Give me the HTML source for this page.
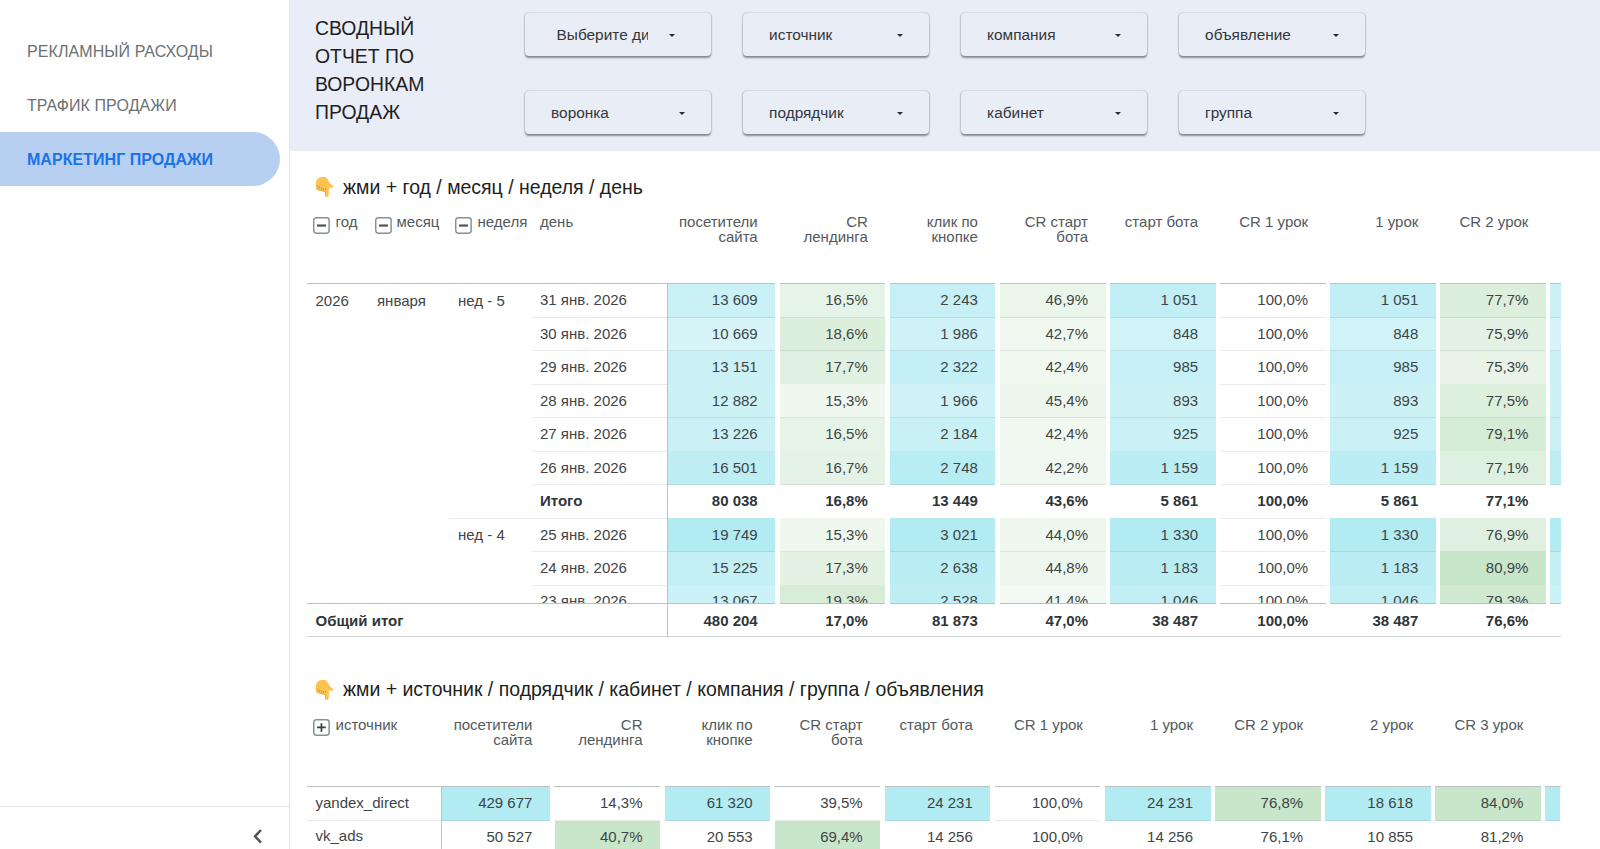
<!DOCTYPE html><html lang="ru"><head><meta charset="utf-8"><title>Сводный отчет по воронкам продаж</title><style>
*{box-sizing:border-box;margin:0;padding:0}
html,body{width:1600px;height:849px;overflow:hidden;background:#fff}
body{font-family:"Liberation Sans",sans-serif;color:#3c4043;position:relative}
.abs{position:absolute}
.t{position:absolute;white-space:nowrap;font-size:15px;line-height:17px;color:#3f4447}
.r{text-align:right}
.b{font-weight:700;color:#30353a}
.h{color:#53595d}
.cell{position:absolute}
.ln{position:absolute;height:1px;background:#dcdfe0}
.dd{position:absolute;width:186px;height:43.2px;border-radius:4px;background:#e9edf6;
    box-shadow:0 1.6px 2px rgba(0,0,0,.40),0 0 1.6px rgba(0,0,0,.28)}
.dd span{position:absolute;top:12.7px;font-size:15.4px;line-height:18px;color:#33373b;white-space:nowrap}
.dd i{position:absolute;top:21.1px;width:0;height:0;border-left:3px solid transparent;border-right:3px solid transparent;border-top:3.2px solid #2a2d30}
.nav{position:absolute;left:27px;font-size:16px;line-height:20px;letter-spacing:.08px;color:#6a7175;white-space:nowrap}
.xb{position:absolute;width:16.5px;height:16.5px;border:1.8px solid #868e91;border-radius:3px;background:#fff}
.xb:before{content:"";position:absolute;left:2.7px;right:2.7px;top:5.3px;height:2.3px;background:#50565a}
.xb.p:before{left:2.6px;right:2.6px;top:5.55px;height:1.8px;background:#3f4447}
.xb.p:after{content:"";position:absolute;top:2.6px;bottom:2.6px;left:5.55px;width:1.8px;background:#3f4447}
.ttl{position:absolute;left:343px;font-size:19.48px;line-height:24px;color:#1d1f21;white-space:nowrap}
</style></head><body>
<div class="abs" style="left:0;top:0;width:289px;height:849px;background:#fff"></div>
<div class="abs" style="left:289px;top:0;width:1px;height:849px;background:#e3e5e8"></div>
<div class="abs" style="left:0;top:132.4px;width:280px;height:54px;background:#b7d0f1;border-radius:0 27px 27px 0"></div>
<div class="nav" style="top:42.3px">РЕКЛАМНЫЙ РАСХОДЫ</div>
<div class="nav" style="top:96.3px">ТРАФИК ПРОДАЖИ</div>
<div class="nav" style="top:150.3px;font-weight:700;color:#1a73e8;letter-spacing:.04px">МАРКЕТИНГ ПРОДАЖИ</div>
<div class="abs" style="left:0;top:806px;width:289px;height:1px;background:#e3e5e8"></div>
<svg class="abs" style="left:250px;top:827.4px" width="16" height="18" viewBox="0 0 16 18"><path d="M11 3 L5 9.3 L11 15.6" fill="none" stroke="#4d5156" stroke-width="2.4"/></svg>
<div class="abs" style="left:290px;top:0;width:1310px;height:151px;background:#e8edf7"></div>
<div class="abs" style="left:315px;top:13.6px;font-size:19.4px;line-height:28px;color:#1f2123">СВОДНЫЙ<br>ОТЧЕТ ПО<br>ВОРОНКАМ<br>ПРОДАЖ</div>
<div class="dd" style="left:524.6px;top:13px"><span style="left:32px"><b style="font-weight:400;display:block;width:91.6px;overflow:hidden">Выберите ди</b></span><i style="left:144.2px"></i></div>
<div class="dd" style="left:742.6px;top:13px"><span style="left:26.5px">источник</span><i style="left:154.6px"></i></div>
<div class="dd" style="left:960.6px;top:13px"><span style="left:26.5px">компания</span><i style="left:154.6px"></i></div>
<div class="dd" style="left:1178.6px;top:13px"><span style="left:26.5px">объявление</span><i style="left:154.6px"></i></div>
<div class="dd" style="left:524.6px;top:91px"><span style="left:26.5px">воронка</span><i style="left:154.6px"></i></div>
<div class="dd" style="left:742.6px;top:91px"><span style="left:26.5px">подрядчик</span><i style="left:154.6px"></i></div>
<div class="dd" style="left:960.6px;top:91px"><span style="left:26.5px">кабинет</span><i style="left:154.6px"></i></div>
<div class="dd" style="left:1178.6px;top:91px"><span style="left:26.5px">группа</span><i style="left:154.6px"></i></div>
<svg class="abs" style="left:306.0px;top:170.0px" width="30" height="34" viewBox="0 0 30 34"><path d="M16.4 6.9 C13.5 6.9 11.7 8.1 11 9.6 C10.3 10.7 10 11.6 10 12.4 L9.8 18 C9.8 18.8 10 19.1 10.5 19.3 L14 20.8 L17.6 21.4 L19 21.6 L19.2 25.6 C19.3 26.6 20 27 20.8 27 C21.8 27 22.5 26.6 22.6 25.9 L23 17.6 L24 17.8 L26.4 17.8 C27.1 17.5 27.3 16.7 27.1 16 C26.9 15.5 26.5 15.2 26 15 L23.6 13.2 C23.2 12 22.8 11.2 22.2 10.4 C21.8 9.5 21.4 8.8 20.8 8.2 C20.2 7.5 19.5 7.1 18.8 7 Z" fill="#fcc350"/><path d="M11.4 15.3 L11.7 16.6 M13.2 16.2 L13.3 18.9 M15.6 17.3 L15.4 19.6 M17.6 18 L17.3 20.4 M19.5 18.3 L19.3 20" stroke="#c58f3c" stroke-width=".8" fill="none"/><path d="M10 18.6 L14 20.5 L19.2 21.5 L19.5 25.6" stroke="#cf9a48" stroke-width=".7" fill="none" opacity=".8"/></svg>
<div class="ttl" style="top:175px">жми + год / месяц / неделя / день</div>
<svg class="abs" style="left:312.8px;top:216.8px" width="18" height="18" viewBox="0 0 18 18"><rect x=".75" y=".75" width="15.4" height="15.4" rx="2.6" fill="#fff" stroke="#868f92" stroke-width="1.45"/><path d="M3.9499999999999993 8.549999999999999 H12.95" stroke="#4d5357" stroke-width="2.2" fill="none"/></svg>
<div class="t h" style="left:335.5px;top:212.9px">год</div>
<svg class="abs" style="left:374.90000000000003px;top:216.8px" width="18" height="18" viewBox="0 0 18 18"><rect x=".75" y=".75" width="15.4" height="15.4" rx="2.6" fill="#fff" stroke="#868f92" stroke-width="1.45"/><path d="M3.9499999999999993 8.549999999999999 H12.95" stroke="#4d5357" stroke-width="2.2" fill="none"/></svg>
<div class="t h" style="left:396.5px;top:212.9px">месяц</div>
<svg class="abs" style="left:455.40000000000003px;top:216.8px" width="18" height="18" viewBox="0 0 18 18"><rect x=".75" y=".75" width="15.4" height="15.4" rx="2.6" fill="#fff" stroke="#868f92" stroke-width="1.45"/><path d="M3.9499999999999993 8.549999999999999 H12.95" stroke="#4d5357" stroke-width="2.2" fill="none"/></svg>
<div class="t h" style="left:477.5px;top:212.9px">неделя</div>
<div class="t h" style="left:540px;top:212.9px">день</div>
<div class="t h r" style="left:617.7px;width:140px;top:214px;line-height:15px">посетители<br>сайта</div>
<div class="t h r" style="left:727.8px;width:140px;top:214px;line-height:15px">CR<br>лендинга</div>
<div class="t h r" style="left:837.9px;width:140px;top:214px;line-height:15px">клик по<br>кнопке</div>
<div class="t h r" style="left:948.0px;width:140px;top:214px;line-height:15px">CR старт<br>бота</div>
<div class="t h r" style="left:1058.1px;width:140px;top:214px;line-height:15px">старт бота</div>
<div class="t h r" style="left:1168.2px;width:140px;top:214px;line-height:15px">CR 1 урок</div>
<div class="t h r" style="left:1278.3px;width:140px;top:214px;line-height:15px">1 урок</div>
<div class="t h r" style="left:1388.4px;width:140px;top:214px;line-height:15px">CR 2 урок</div>
<div class="abs" style="left:300px;top:284.0px;width:1261px;height:319.0px;overflow:hidden">
<div class="cell" style="left:367.4px;top:0.0px;width:107.8px;height:33.8px;background:rgb(201,241,246)"></div>
<div class="t r" style="left:357.7px;width:100px;top:7.3px">13 609</div>
<div class="cell" style="left:479.8px;top:0.0px;width:105.5px;height:33.8px;background:rgb(230,244,231)"></div>
<div class="t r" style="left:467.8px;width:100px;top:7.3px">16,5%</div>
<div class="cell" style="left:589.9px;top:0.0px;width:105.5px;height:33.8px;background:rgb(198,240,245)"></div>
<div class="t r" style="left:577.9px;width:100px;top:7.3px">2 243</div>
<div class="cell" style="left:700.0px;top:0.0px;width:105.5px;height:33.8px;background:rgb(234,246,234)"></div>
<div class="t r" style="left:688.0px;width:100px;top:7.3px">46,9%</div>
<div class="cell" style="left:810.1px;top:0.0px;width:105.5px;height:33.8px;background:rgb(193,239,245)"></div>
<div class="t r" style="left:798.1px;width:100px;top:7.3px">1 051</div>
<div class="t r" style="left:908.2px;width:100px;top:7.3px">100,0%</div>
<div class="cell" style="left:1030.3px;top:0.0px;width:105.5px;height:33.8px;background:rgb(193,239,245)"></div>
<div class="t r" style="left:1018.3px;width:100px;top:7.3px">1 051</div>
<div class="cell" style="left:1140.4px;top:0.0px;width:105.5px;height:33.8px;background:rgb(219,239,220)"></div>
<div class="t r" style="left:1128.4px;width:100px;top:7.3px">77,7%</div>
<div class="cell" style="left:1249.5px;top:0.0px;width:13px;height:33.8px;background:rgb(201,241,246)"></div>
<div class="t" style="left:240px;top:7.3px">31 янв. 2026</div>
<div class="ln" style="left:231.5px;top:33.0px;width:1029.5px;background:rgba(110,125,130,.17)"></div>
<div class="cell" style="left:367.4px;top:33.5px;width:107.8px;height:33.8px;background:rgb(215,245,248)"></div>
<div class="t r" style="left:357.7px;width:100px;top:40.8px">10 669</div>
<div class="cell" style="left:479.8px;top:33.5px;width:105.5px;height:33.8px;background:rgb(220,239,220)"></div>
<div class="t r" style="left:467.8px;width:100px;top:40.8px">18,6%</div>
<div class="cell" style="left:589.9px;top:33.5px;width:105.5px;height:33.8px;background:rgb(206,242,247)"></div>
<div class="t r" style="left:577.9px;width:100px;top:40.8px">1 986</div>
<div class="cell" style="left:700.0px;top:33.5px;width:105.5px;height:33.8px;background:rgb(240,248,240)"></div>
<div class="t r" style="left:688.0px;width:100px;top:40.8px">42,7%</div>
<div class="cell" style="left:810.1px;top:33.5px;width:105.5px;height:33.8px;background:rgb(207,243,247)"></div>
<div class="t r" style="left:798.1px;width:100px;top:40.8px">848</div>
<div class="t r" style="left:908.2px;width:100px;top:40.8px">100,0%</div>
<div class="cell" style="left:1030.3px;top:33.5px;width:105.5px;height:33.8px;background:rgb(207,243,247)"></div>
<div class="t r" style="left:1018.3px;width:100px;top:40.8px">848</div>
<div class="cell" style="left:1140.4px;top:33.5px;width:105.5px;height:33.8px;background:rgb(228,242,228)"></div>
<div class="t r" style="left:1128.4px;width:100px;top:40.8px">75,9%</div>
<div class="cell" style="left:1249.5px;top:33.5px;width:13px;height:33.8px;background:rgb(215,245,248)"></div>
<div class="t" style="left:240px;top:40.8px">30 янв. 2026</div>
<div class="ln" style="left:231.5px;top:66.4px;width:1029.5px;background:rgba(110,125,130,.17)"></div>
<div class="cell" style="left:367.4px;top:66.9px;width:107.8px;height:33.8px;background:rgb(203,241,246)"></div>
<div class="t r" style="left:357.7px;width:100px;top:74.2px">13 151</div>
<div class="cell" style="left:479.8px;top:66.9px;width:105.5px;height:33.8px;background:rgb(224,241,225)"></div>
<div class="t r" style="left:467.8px;width:100px;top:74.2px">17,7%</div>
<div class="cell" style="left:589.9px;top:66.9px;width:105.5px;height:33.8px;background:rgb(195,239,245)"></div>
<div class="t r" style="left:577.9px;width:100px;top:74.2px">2 322</div>
<div class="cell" style="left:700.0px;top:66.9px;width:105.5px;height:33.8px;background:rgb(240,248,240)"></div>
<div class="t r" style="left:688.0px;width:100px;top:74.2px">42,4%</div>
<div class="cell" style="left:810.1px;top:66.9px;width:105.5px;height:33.8px;background:rgb(198,240,245)"></div>
<div class="t r" style="left:798.1px;width:100px;top:74.2px">985</div>
<div class="t r" style="left:908.2px;width:100px;top:74.2px">100,0%</div>
<div class="cell" style="left:1030.3px;top:66.9px;width:105.5px;height:33.8px;background:rgb(198,240,245)"></div>
<div class="t r" style="left:1018.3px;width:100px;top:74.2px">985</div>
<div class="cell" style="left:1140.4px;top:66.9px;width:105.5px;height:33.8px;background:rgb(232,244,232)"></div>
<div class="t r" style="left:1128.4px;width:100px;top:74.2px">75,3%</div>
<div class="cell" style="left:1249.5px;top:66.9px;width:13px;height:33.8px;background:rgb(203,241,246)"></div>
<div class="t" style="left:240px;top:74.2px">29 янв. 2026</div>
<div class="ln" style="left:231.5px;top:99.9px;width:1029.5px;background:rgba(110,125,130,.17)"></div>
<div class="cell" style="left:367.4px;top:100.4px;width:107.8px;height:33.8px;background:rgb(204,242,246)"></div>
<div class="t r" style="left:357.7px;width:100px;top:107.7px">12 882</div>
<div class="cell" style="left:479.8px;top:100.4px;width:105.5px;height:33.8px;background:rgb(238,248,239)"></div>
<div class="t r" style="left:467.8px;width:100px;top:107.7px">15,3%</div>
<div class="cell" style="left:589.9px;top:100.4px;width:105.5px;height:33.8px;background:rgb(206,242,247)"></div>
<div class="t r" style="left:577.9px;width:100px;top:107.7px">1 966</div>
<div class="cell" style="left:700.0px;top:100.4px;width:105.5px;height:33.8px;background:rgb(236,246,237)"></div>
<div class="t r" style="left:688.0px;width:100px;top:107.7px">45,4%</div>
<div class="cell" style="left:810.1px;top:100.4px;width:105.5px;height:33.8px;background:rgb(204,242,246)"></div>
<div class="t r" style="left:798.1px;width:100px;top:107.7px">893</div>
<div class="t r" style="left:908.2px;width:100px;top:107.7px">100,0%</div>
<div class="cell" style="left:1030.3px;top:100.4px;width:105.5px;height:33.8px;background:rgb(204,242,246)"></div>
<div class="t r" style="left:1018.3px;width:100px;top:107.7px">893</div>
<div class="cell" style="left:1140.4px;top:100.4px;width:105.5px;height:33.8px;background:rgb(221,240,222)"></div>
<div class="t r" style="left:1128.4px;width:100px;top:107.7px">77,5%</div>
<div class="cell" style="left:1249.5px;top:100.4px;width:13px;height:33.8px;background:rgb(204,242,246)"></div>
<div class="t" style="left:240px;top:107.7px">28 янв. 2026</div>
<div class="ln" style="left:231.5px;top:133.4px;width:1029.5px;background:rgba(110,125,130,.17)"></div>
<div class="cell" style="left:367.4px;top:133.9px;width:107.8px;height:33.8px;background:rgb(203,241,246)"></div>
<div class="t r" style="left:357.7px;width:100px;top:141.2px">13 226</div>
<div class="cell" style="left:479.8px;top:133.9px;width:105.5px;height:33.8px;background:rgb(230,244,231)"></div>
<div class="t r" style="left:467.8px;width:100px;top:141.2px">16,5%</div>
<div class="cell" style="left:589.9px;top:133.9px;width:105.5px;height:33.8px;background:rgb(200,241,246)"></div>
<div class="t r" style="left:577.9px;width:100px;top:141.2px">2 184</div>
<div class="cell" style="left:700.0px;top:133.9px;width:105.5px;height:33.8px;background:rgb(240,248,240)"></div>
<div class="t r" style="left:688.0px;width:100px;top:141.2px">42,4%</div>
<div class="cell" style="left:810.1px;top:133.9px;width:105.5px;height:33.8px;background:rgb(201,241,246)"></div>
<div class="t r" style="left:798.1px;width:100px;top:141.2px">925</div>
<div class="t r" style="left:908.2px;width:100px;top:141.2px">100,0%</div>
<div class="cell" style="left:1030.3px;top:133.9px;width:105.5px;height:33.8px;background:rgb(201,241,246)"></div>
<div class="t r" style="left:1018.3px;width:100px;top:141.2px">925</div>
<div class="cell" style="left:1140.4px;top:133.9px;width:105.5px;height:33.8px;background:rgb(213,236,214)"></div>
<div class="t r" style="left:1128.4px;width:100px;top:141.2px">79,1%</div>
<div class="cell" style="left:1249.5px;top:133.9px;width:13px;height:33.8px;background:rgb(203,241,246)"></div>
<div class="t" style="left:240px;top:141.2px">27 янв. 2026</div>
<div class="ln" style="left:231.5px;top:166.8px;width:1029.5px;background:rgba(110,125,130,.17)"></div>
<div class="cell" style="left:367.4px;top:167.3px;width:107.8px;height:33.8px;background:rgb(190,238,244)"></div>
<div class="t r" style="left:357.7px;width:100px;top:174.7px">16 501</div>
<div class="cell" style="left:479.8px;top:167.3px;width:105.5px;height:33.8px;background:rgb(229,243,230)"></div>
<div class="t r" style="left:467.8px;width:100px;top:174.7px">16,7%</div>
<div class="cell" style="left:589.9px;top:167.3px;width:105.5px;height:33.8px;background:rgb(184,237,243)"></div>
<div class="t r" style="left:577.9px;width:100px;top:174.7px">2 748</div>
<div class="cell" style="left:700.0px;top:167.3px;width:105.5px;height:33.8px;background:rgb(241,248,241)"></div>
<div class="t r" style="left:688.0px;width:100px;top:174.7px">42,2%</div>
<div class="cell" style="left:810.1px;top:167.3px;width:105.5px;height:33.8px;background:rgb(187,237,244)"></div>
<div class="t r" style="left:798.1px;width:100px;top:174.7px">1 159</div>
<div class="t r" style="left:908.2px;width:100px;top:174.7px">100,0%</div>
<div class="cell" style="left:1030.3px;top:167.3px;width:105.5px;height:33.8px;background:rgb(187,237,244)"></div>
<div class="t r" style="left:1018.3px;width:100px;top:174.7px">1 159</div>
<div class="cell" style="left:1140.4px;top:167.3px;width:105.5px;height:33.8px;background:rgb(222,240,223)"></div>
<div class="t r" style="left:1128.4px;width:100px;top:174.7px">77,1%</div>
<div class="cell" style="left:1249.5px;top:167.3px;width:13px;height:33.8px;background:rgb(190,238,244)"></div>
<div class="t" style="left:240px;top:174.7px">26 янв. 2026</div>
<div class="ln" style="left:231.5px;top:200.3px;width:1029.5px;background:rgba(110,125,130,.17)"></div>
<div class="t r b" style="left:357.7px;width:100px;top:208.1px">80 038</div>
<div class="t r b" style="left:467.8px;width:100px;top:208.1px">16,8%</div>
<div class="t r b" style="left:577.9px;width:100px;top:208.1px">13 449</div>
<div class="t r b" style="left:688.0px;width:100px;top:208.1px">43,6%</div>
<div class="t r b" style="left:798.1px;width:100px;top:208.1px">5 861</div>
<div class="t r b" style="left:908.2px;width:100px;top:208.1px">100,0%</div>
<div class="t r b" style="left:1018.3px;width:100px;top:208.1px">5 861</div>
<div class="t r b" style="left:1128.4px;width:100px;top:208.1px">77,1%</div>
<div class="t b" style="left:240px;top:208.1px">Итого</div>
<div class="ln" style="left:149.0px;top:233.8px;width:1112.0px;background:rgba(110,125,130,.17)"></div>
<div class="cell" style="left:367.4px;top:234.3px;width:107.8px;height:33.8px;background:rgb(178,235,242)"></div>
<div class="t r" style="left:357.7px;width:100px;top:241.6px">19 749</div>
<div class="cell" style="left:479.8px;top:234.3px;width:105.5px;height:33.8px;background:rgb(238,248,239)"></div>
<div class="t r" style="left:467.8px;width:100px;top:241.6px">15,3%</div>
<div class="cell" style="left:589.9px;top:234.3px;width:105.5px;height:33.8px;background:rgb(178,235,242)"></div>
<div class="t r" style="left:577.9px;width:100px;top:241.6px">3 021</div>
<div class="cell" style="left:700.0px;top:234.3px;width:105.5px;height:33.8px;background:rgb(238,247,238)"></div>
<div class="t r" style="left:688.0px;width:100px;top:241.6px">44,0%</div>
<div class="cell" style="left:810.1px;top:234.3px;width:105.5px;height:33.8px;background:rgb(178,235,242)"></div>
<div class="t r" style="left:798.1px;width:100px;top:241.6px">1 330</div>
<div class="t r" style="left:908.2px;width:100px;top:241.6px">100,0%</div>
<div class="cell" style="left:1030.3px;top:234.3px;width:105.5px;height:33.8px;background:rgb(178,235,242)"></div>
<div class="t r" style="left:1018.3px;width:100px;top:241.6px">1 330</div>
<div class="cell" style="left:1140.4px;top:234.3px;width:105.5px;height:33.8px;background:rgb(223,240,224)"></div>
<div class="t r" style="left:1128.4px;width:100px;top:241.6px">76,9%</div>
<div class="cell" style="left:1249.5px;top:234.3px;width:13px;height:33.8px;background:rgb(178,235,242)"></div>
<div class="t" style="left:240px;top:241.6px">25 янв. 2026</div>
<div class="ln" style="left:231.5px;top:267.3px;width:1029.5px;background:rgba(110,125,130,.17)"></div>
<div class="cell" style="left:367.4px;top:267.8px;width:107.8px;height:33.8px;background:rgb(195,239,245)"></div>
<div class="t r" style="left:357.7px;width:100px;top:275.1px">15 225</div>
<div class="cell" style="left:479.8px;top:267.8px;width:105.5px;height:33.8px;background:rgb(227,242,227)"></div>
<div class="t r" style="left:467.8px;width:100px;top:275.1px">17,3%</div>
<div class="cell" style="left:589.9px;top:267.8px;width:105.5px;height:33.8px;background:rgb(187,237,244)"></div>
<div class="t r" style="left:577.9px;width:100px;top:275.1px">2 638</div>
<div class="cell" style="left:700.0px;top:267.8px;width:105.5px;height:33.8px;background:rgb(237,247,237)"></div>
<div class="t r" style="left:688.0px;width:100px;top:275.1px">44,8%</div>
<div class="cell" style="left:810.1px;top:267.8px;width:105.5px;height:33.8px;background:rgb(186,237,243)"></div>
<div class="t r" style="left:798.1px;width:100px;top:275.1px">1 183</div>
<div class="t r" style="left:908.2px;width:100px;top:275.1px">100,0%</div>
<div class="cell" style="left:1030.3px;top:267.8px;width:105.5px;height:33.8px;background:rgb(186,237,243)"></div>
<div class="t r" style="left:1018.3px;width:100px;top:275.1px">1 183</div>
<div class="cell" style="left:1140.4px;top:267.8px;width:105.5px;height:33.8px;background:rgb(200,230,201)"></div>
<div class="t r" style="left:1128.4px;width:100px;top:275.1px">80,9%</div>
<div class="cell" style="left:1249.5px;top:267.8px;width:13px;height:33.8px;background:rgb(195,239,245)"></div>
<div class="t" style="left:240px;top:275.1px">24 янв. 2026</div>
<div class="ln" style="left:231.5px;top:300.7px;width:1029.5px;background:rgba(110,125,130,.17)"></div>
<div class="cell" style="left:367.4px;top:301.2px;width:107.8px;height:33.8px;background:rgb(203,242,246)"></div>
<div class="t r" style="left:357.7px;width:100px;top:307.5px">13 067</div>
<div class="cell" style="left:479.8px;top:301.2px;width:105.5px;height:33.8px;background:rgb(215,237,216)"></div>
<div class="t r" style="left:467.8px;width:100px;top:307.5px">19,3%</div>
<div class="cell" style="left:589.9px;top:301.2px;width:105.5px;height:33.8px;background:rgb(190,238,244)"></div>
<div class="t r" style="left:577.9px;width:100px;top:307.5px">2 528</div>
<div class="cell" style="left:700.0px;top:301.2px;width:105.5px;height:33.8px;background:rgb(242,249,242)"></div>
<div class="t r" style="left:688.0px;width:100px;top:307.5px">41,4%</div>
<div class="cell" style="left:810.1px;top:301.2px;width:105.5px;height:33.8px;background:rgb(193,239,245)"></div>
<div class="t r" style="left:798.1px;width:100px;top:307.5px">1 046</div>
<div class="t r" style="left:908.2px;width:100px;top:307.5px">100,0%</div>
<div class="cell" style="left:1030.3px;top:301.2px;width:105.5px;height:33.8px;background:rgb(193,239,245)"></div>
<div class="t r" style="left:1018.3px;width:100px;top:307.5px">1 046</div>
<div class="cell" style="left:1140.4px;top:301.2px;width:105.5px;height:33.8px;background:rgb(208,234,209)"></div>
<div class="t r" style="left:1128.4px;width:100px;top:307.5px">79,3%</div>
<div class="cell" style="left:1249.5px;top:301.2px;width:13px;height:33.8px;background:rgb(203,242,246)"></div>
<div class="t" style="left:240px;top:307.5px">23 янв. 2026</div>
<div class="ln" style="left:231.5px;top:334.2px;width:1029.5px;background:rgba(110,125,130,.17)"></div>
<div class="t" style="left:15.5px;top:7.6px">2026</div>
<div class="t" style="left:77px;top:7.6px">января</div>
<div class="t" style="left:158px;top:7.6px">нед - 5</div>
<div class="t" style="left:158px;top:241.9px">нед - 4</div>
</div>
<div class="ln" style="left:307px;top:283px;width:1254px;background:#bcc0c2;height:1px"></div>
<div class="ln" style="left:307px;top:603px;width:1254px;background:#bcc0c2;height:1px"></div>
<div class="ln" style="left:307px;top:636px;width:1254px;background:#d3d6d8;height:1.2px"></div>
<div class="abs" style="left:666.5px;top:284px;width:1.2px;height:353px;background:#bcc1c4"></div>
<div class="abs" style="left:775.2px;top:282.5px;width:4.6px;height:322.3px;background:#fff"></div>
<div class="abs" style="left:885.3px;top:282.5px;width:4.6px;height:322.3px;background:#fff"></div>
<div class="abs" style="left:995.4px;top:282.5px;width:4.6px;height:322.3px;background:#fff"></div>
<div class="abs" style="left:1105.5px;top:282.5px;width:4.6px;height:322.3px;background:#fff"></div>
<div class="abs" style="left:1215.6px;top:282.5px;width:4.6px;height:322.3px;background:#fff"></div>
<div class="abs" style="left:1325.7px;top:282.5px;width:4.6px;height:322.3px;background:#fff"></div>
<div class="abs" style="left:1435.8px;top:282.5px;width:4.6px;height:322.3px;background:#fff"></div>
<div class="abs" style="left:1545.9px;top:282.5px;width:4.6px;height:322.3px;background:#fff"></div>
<div class="abs" style="left:1656.0px;top:282.5px;width:4.6px;height:322.3px;background:#fff"></div>
<div class="t b" style="left:315.5px;top:611.5px">Общий итог</div>
<div class="t r b" style="left:657.7px;width:100px;top:611.5px">480 204</div>
<div class="t r b" style="left:767.8px;width:100px;top:611.5px">17,0%</div>
<div class="t r b" style="left:877.9px;width:100px;top:611.5px">81 873</div>
<div class="t r b" style="left:988.0px;width:100px;top:611.5px">47,0%</div>
<div class="t r b" style="left:1098.1px;width:100px;top:611.5px">38 487</div>
<div class="t r b" style="left:1208.2px;width:100px;top:611.5px">100,0%</div>
<div class="t r b" style="left:1318.3px;width:100px;top:611.5px">38 487</div>
<div class="t r b" style="left:1428.4px;width:100px;top:611.5px">76,6%</div>
<svg class="abs" style="left:306.0px;top:673.0px" width="30" height="34" viewBox="0 0 30 34"><path d="M16.4 6.9 C13.5 6.9 11.7 8.1 11 9.6 C10.3 10.7 10 11.6 10 12.4 L9.8 18 C9.8 18.8 10 19.1 10.5 19.3 L14 20.8 L17.6 21.4 L19 21.6 L19.2 25.6 C19.3 26.6 20 27 20.8 27 C21.8 27 22.5 26.6 22.6 25.9 L23 17.6 L24 17.8 L26.4 17.8 C27.1 17.5 27.3 16.7 27.1 16 C26.9 15.5 26.5 15.2 26 15 L23.6 13.2 C23.2 12 22.8 11.2 22.2 10.4 C21.8 9.5 21.4 8.8 20.8 8.2 C20.2 7.5 19.5 7.1 18.8 7 Z" fill="#fcc350"/><path d="M11.4 15.3 L11.7 16.6 M13.2 16.2 L13.3 18.9 M15.6 17.3 L15.4 19.6 M17.6 18 L17.3 20.4 M19.5 18.3 L19.3 20" stroke="#c58f3c" stroke-width=".8" fill="none"/><path d="M10 18.6 L14 20.5 L19.2 21.5 L19.5 25.6" stroke="#cf9a48" stroke-width=".7" fill="none" opacity=".8"/></svg>
<div class="ttl" style="top:677.4px">жми + источник / подрядчик / кабинет / компания / группа / объявления</div>
<svg class="abs" style="left:312.8px;top:719.1px" width="18" height="18" viewBox="0 0 18 18"><rect x=".75" y=".75" width="15.4" height="15.4" rx="2.6" fill="#fff" stroke="#868f92" stroke-width="1.45"/><path d="M4.1499999999999995 8.45 H12.75 M8.45 4.1499999999999995 V12.75" stroke="#363b3f" stroke-width="1.7" fill="none"/></svg>
<div class="t h" style="left:335.5px;top:716.2px">источник</div>
<div class="t h r" style="left:392.4px;width:140px;top:717.2px;line-height:15px">посетители<br>сайта</div>
<div class="t h r" style="left:502.5px;width:140px;top:717.2px;line-height:15px">CR<br>лендинга</div>
<div class="t h r" style="left:612.6px;width:140px;top:717.2px;line-height:15px">клик по<br>кнопке</div>
<div class="t h r" style="left:722.7px;width:140px;top:717.2px;line-height:15px">CR старт<br>бота</div>
<div class="t h r" style="left:832.8px;width:140px;top:717.2px;line-height:15px">старт бота</div>
<div class="t h r" style="left:942.9px;width:140px;top:717.2px;line-height:15px">CR 1 урок</div>
<div class="t h r" style="left:1053.0px;width:140px;top:717.2px;line-height:15px">1 урок</div>
<div class="t h r" style="left:1163.1px;width:140px;top:717.2px;line-height:15px">CR 2 урок</div>
<div class="t h r" style="left:1273.2px;width:140px;top:717.2px;line-height:15px">2 урок</div>
<div class="t h r" style="left:1383.3px;width:140px;top:717.2px;line-height:15px">CR 3 урок</div>
<div class="cell" style="left:442.1px;top:787.0px;width:107.8px;height:33.8px;background:rgb(178,235,242)"></div>
<div class="t r" style="left:432.4px;width:100px;top:794.0px">429 677</div>
<div class="t r" style="left:542.5px;width:100px;top:794.0px">14,3%</div>
<div class="cell" style="left:664.6px;top:787.0px;width:105.5px;height:33.8px;background:rgb(178,235,242)"></div>
<div class="t r" style="left:652.6px;width:100px;top:794.0px">61 320</div>
<div class="t r" style="left:762.7px;width:100px;top:794.0px">39,5%</div>
<div class="cell" style="left:884.8px;top:787.0px;width:105.5px;height:33.8px;background:rgb(178,235,242)"></div>
<div class="t r" style="left:872.8px;width:100px;top:794.0px">24 231</div>
<div class="t r" style="left:982.9px;width:100px;top:794.0px">100,0%</div>
<div class="cell" style="left:1105.0px;top:787.0px;width:105.5px;height:33.8px;background:rgb(178,235,242)"></div>
<div class="t r" style="left:1093.0px;width:100px;top:794.0px">24 231</div>
<div class="cell" style="left:1215.1px;top:787.0px;width:105.5px;height:33.8px;background:rgb(200,230,201)"></div>
<div class="t r" style="left:1203.1px;width:100px;top:794.0px">76,8%</div>
<div class="cell" style="left:1325.2px;top:787.0px;width:105.5px;height:33.8px;background:rgb(178,235,242)"></div>
<div class="t r" style="left:1313.2px;width:100px;top:794.0px">18 618</div>
<div class="cell" style="left:1435.3px;top:787.0px;width:105.5px;height:33.8px;background:rgb(200,230,201)"></div>
<div class="t r" style="left:1423.3px;width:100px;top:794.0px">84,0%</div>
<div class="cell" style="left:1545.4px;top:787.0px;width:15px;height:33.8px;background:rgb(178,235,242)"></div>
<div class="t" style="left:315.5px;top:793.9px">yandex_direct</div>
<div class="ln" style="left:307px;top:820.0px;width:1254px;background:rgba(110,125,130,.17)"></div>
<div class="t r" style="left:432.4px;width:100px;top:827.5px">50 527</div>
<div class="cell" style="left:554.5px;top:820.5px;width:105.5px;height:33.8px;background:rgb(200,230,201)"></div>
<div class="t r" style="left:542.5px;width:100px;top:827.5px">40,7%</div>
<div class="t r" style="left:652.6px;width:100px;top:827.5px">20 553</div>
<div class="cell" style="left:774.7px;top:820.5px;width:105.5px;height:33.8px;background:rgb(200,230,201)"></div>
<div class="t r" style="left:762.7px;width:100px;top:827.5px">69,4%</div>
<div class="t r" style="left:872.8px;width:100px;top:827.5px">14 256</div>
<div class="t r" style="left:982.9px;width:100px;top:827.5px">100,0%</div>
<div class="t r" style="left:1093.0px;width:100px;top:827.5px">14 256</div>
<div class="t r" style="left:1203.1px;width:100px;top:827.5px">76,1%</div>
<div class="t r" style="left:1313.2px;width:100px;top:827.5px">10 855</div>
<div class="t r" style="left:1423.3px;width:100px;top:827.5px">81,2%</div>
<div class="t" style="left:315.5px;top:827.4px">vk_ads</div>
<div class="ln" style="left:307px;top:853.4px;width:1254px;background:rgba(110,125,130,.17)"></div>
<div class="ln" style="left:307px;top:786px;width:1254px;background:#bcc0c2;height:1px"></div>
<div class="abs" style="left:441px;top:787px;width:1.2px;height:70px;background:#bcc1c4"></div>
<div class="abs" style="left:549.9px;top:785.5px;width:4.6px;height:64px;background:#fff"></div>
<div class="abs" style="left:660.0px;top:785.5px;width:4.6px;height:64px;background:#fff"></div>
<div class="abs" style="left:770.1px;top:785.5px;width:4.6px;height:64px;background:#fff"></div>
<div class="abs" style="left:880.2px;top:785.5px;width:4.6px;height:64px;background:#fff"></div>
<div class="abs" style="left:990.3px;top:785.5px;width:4.6px;height:64px;background:#fff"></div>
<div class="abs" style="left:1100.4px;top:785.5px;width:4.6px;height:64px;background:#fff"></div>
<div class="abs" style="left:1210.5px;top:785.5px;width:4.6px;height:64px;background:#fff"></div>
<div class="abs" style="left:1320.6px;top:785.5px;width:4.6px;height:64px;background:#fff"></div>
<div class="abs" style="left:1430.7px;top:785.5px;width:4.6px;height:64px;background:#fff"></div>
<div class="abs" style="left:1540.8px;top:785.5px;width:4.6px;height:64px;background:#fff"></div>
</body></html>
